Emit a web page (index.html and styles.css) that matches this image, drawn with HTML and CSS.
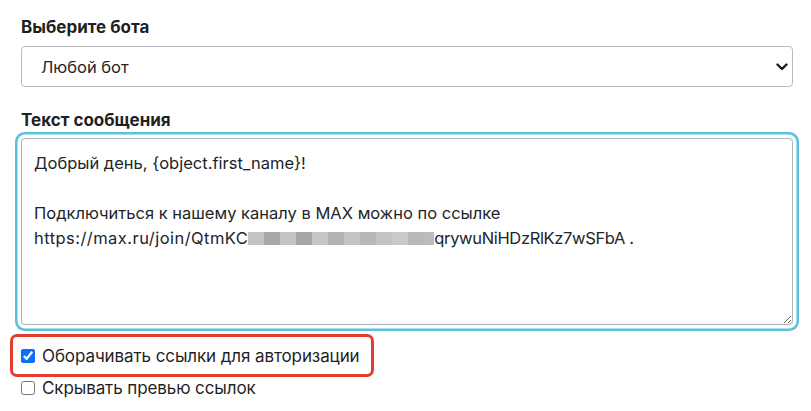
FILE: index.html
```html
<!DOCTYPE html>
<html lang="ru">
<head>
<meta charset="utf-8">
<link rel="stylesheet" href="styles.css">
</head>
<body>
<div class="form">
  <div class="label label-first">Выберите бота</div>
  <div class="select">
    <span>Любой бот</span>
    <svg class="chevron" width="12" height="8" viewBox="0 0 12 8"><path d="M1.5 1.5 L6 6 L10.5 1.5" fill="none" stroke="#1d1d1f" stroke-width="2.4" stroke-linecap="round" stroke-linejoin="round"/></svg>
  </div>
  <div class="label label-second">Текст сообщения</div>
  <div class="textarea">
    <div class="line">Добрый день, {object.first_name}!</div>
    <div class="line">&nbsp;</div>
    <div class="line">Подключиться к нашему каналу в MAX можно по ссылке</div>
    <div class="line"><span class="url-start">https://max.ru/join/QtmKC</span><span class="mosaic"></span><span class="url-end">qrywuNiHDzRlKz7wSFbA .</span></div>
  </div>
  <label class="check highlighted"><input type="checkbox" checked><span>Оборачивать ссылки для авторизации</span></label>
  <label class="check plain"><input type="checkbox"><span>Скрывать превью ссылок</span></label>
</div>
</body>
</html>
```
FILE: styles.css
```css
html, body {
  margin: 0;
  padding: 0;
  background: #ffffff;
}
body {
  font-family: Inter, "Noto Sans", sans-serif;
  color: #212529;
  font-size: 16.5px;
}
.form {
  width: 772px;
  padding-left: 21px;
  display: flex;
  flex-direction: column;
  align-items: flex-start;
}
.label {
  font-weight: 700;
  font-size: 17px;
  line-height: 24px;
  color: #1f1f24;
}
.label-first {
  margin-top: 15px;
  margin-bottom: 7px;
}
.label-second {
  margin-top: 21px;
  margin-bottom: 6px;
}
.select {
  box-sizing: border-box;
  width: 772px;
  height: 41px;
  border: 1px solid #b9b9c2;
  border-radius: 4px;
  display: flex;
  align-items: center;
  justify-content: space-between;
  padding: 0 4px 0 19px;
  font-size: 16.5px;
  line-height: 24px;
}
.chevron {
  display: block;
}
.textarea {
  box-sizing: border-box;
  width: 772px;
  height: 187px;
  border: 1px solid #b3b3bd;
  border-radius: 4px;
  padding: 12px 12px;
  box-shadow: 0 0 0 3.5px #ffffff, 0 0 0 6px #5bc0de;
  resize: both;
  overflow: auto;
  font-size: 16.5px;
  line-height: 25px;
}
.line {
  white-space: nowrap;
}
.url-start {
  letter-spacing: 0.45px;
}
.url-end {
  letter-spacing: -0.35px;
}
.mosaic {
  display: inline-block;
  width: 186px;
  height: 13px;
  vertical-align: -1px;
  background: linear-gradient(to right,
    #c3c3c3 0 16px, #a9a9a9 16px 32px, #c4c4c4 32px 48px, #a7a7a7 48px 64px,
    #c7c7c7 64px 80px, #b3b3b3 80px 96px, #c4c4c4 96px 112px, #b7b7b7 112px 128px,
    #c3c3c3 128px 144px, #cbcbcb 144px 160px, #b9b9b9 160px 176px, #bcbcbc 176px 186px);
}
.check {
  display: inline-flex;
  align-items: center;
  font-size: 17px;
  line-height: 24px;
  color: #1f1f24;
  letter-spacing: -0.1px;
}
.check input {
  width: 14px;
  height: 14px;
  margin: 0 7px 0 0;
  accent-color: #0d6efd;
}
.highlighted {
  margin-top: 9px;
  margin-left: -11px;
  border: 3px solid #e53c32;
  border-radius: 7px;
  padding: 7px 11px 6px 8px;
}
.plain {
  margin-top: -1px;
}
```
